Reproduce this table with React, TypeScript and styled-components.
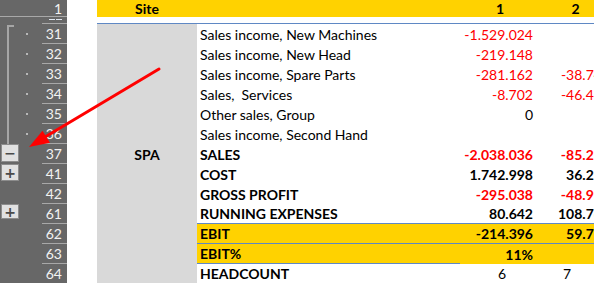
import styled, { createGlobalStyle } from 'styled-components';

const GlobalStyle = createGlobalStyle`
  html, body {
    margin: 0;
    padding: 0;
    background: #fff;
    overflow: hidden;
  }
  body {
    font-family: Lato, "Liberation Sans", sans-serif;
  }
`;

const YELLOW = '#ffd200';
const BLUE = '#5f88c4';
const GUTTER = '#676767';

const Frame = styled.div`
  position: relative;
  width: 594px;
  height: 283px;
  overflow: hidden;
`;

const Sheet = styled.div`
  display: grid;
  grid-template-columns: 42px 25px 30px 100px 263px 77px 77px;
  grid-template-rows: 17px 7px repeat(13, 20px);
  width: 614px;
  font-size: 14px;
  color: #000;
`;

const OutlineCell = styled.div<{ $line?: boolean }>`
  background: ${GUTTER};
  display: flex;
  align-items: stretch;
  box-sizing: border-box;
  border-bottom: ${(p) => (p.$line ? '1px solid #a8a8a8' : 'none')};
`;

const RowNum = styled.div<{ $clip?: boolean }>`
  background: ${GUTTER};
  color: #f2f2f2;
  font-size: 14px;
  box-sizing: border-box;
  border-bottom: 1px solid #a8a8a8;
  display: flex;
  justify-content: flex-end;
  align-items: ${(p) => (p.$clip ? 'flex-start' : 'center')};
  gap: 1px;
  padding-right: 5px;
  padding-top: ${(p) => (p.$clip ? '2px' : '0')};
  overflow: hidden;
  line-height: 19px;
`;

/* the top strokes of a row number squeezed into a tiny row */
const Stub = styled.span`
  width: 6px;
  height: 1px;
  background: #dfe6f0;
`;

const Blank = styled.div`
  background: #fff;
`;

const HeadCell = styled.div<{ $shift?: number }>`
  background: ${YELLOW};
  font-weight: bold;
  display: flex;
  align-items: center;
  justify-content: center;
  padding-left: ${(p) => p.$shift || 0}px;
  line-height: 17px;
  white-space: nowrap;
`;

const Spacer = styled.div<{ $blue?: boolean }>`
  background: #fff;
  box-sizing: border-box;
  border-bottom: ${(p) => (p.$blue ? `1px solid ${BLUE}` : 'none')};
`;

const SiteCell = styled.div`
  grid-column: 4;
  grid-row: 3 / span 13;
  background: #d9d9d9;
  border-bottom: 1px solid ${BLUE};
  box-sizing: border-box;
  display: flex;
  align-items: center;
  justify-content: center;
  font-weight: bold;
  padding-top: 2px;
`;

const Label = styled.div<{ $bold?: boolean; $fill?: boolean; $line?: boolean }>`
  background: ${(p) => (p.$fill ? YELLOW : '#fff')};
  font-weight: ${(p) => (p.$bold ? 'bold' : 'normal')};
  box-sizing: border-box;
  border-bottom: ${(p) => (p.$line ? `1px solid ${BLUE}` : 'none')};
  display: flex;
  align-items: center;
  padding-left: 3px;
  white-space: pre;
`;

const Value = styled.div<{
  $bold?: boolean;
  $red?: boolean;
  $fill?: boolean;
  $line?: boolean;
  $pad: number;
}>`
  background: ${(p) => (p.$fill ? YELLOW : '#fff')};
  color: ${(p) => (p.$red ? '#ff0000' : '#000')};
  font-weight: ${(p) => (p.$bold ? 'bold' : 'normal')};
  box-sizing: border-box;
  border-bottom: ${(p) => (p.$line ? `1px solid ${BLUE}` : 'none')};
  display: flex;
  align-items: center;
  justify-content: flex-end;
  padding-right: ${(p) => p.$pad}px;
  white-space: nowrap;
`;

const Bracket = styled.div<{ $top?: boolean }>`
  margin-left: 7px;
  width: 5px;
  margin-top: ${(p) => (p.$top ? '1px' : '0')};
  border-left: 2px solid #a6a6a6;
  border-top: ${(p) => (p.$top ? '2px solid #a6a6a6' : 'none')};
  flex-shrink: 0;
`;

const Dot = styled.div`
  width: 2px;
  height: 2px;
  background: #b8b8b8;
  margin-left: 12px;
  align-self: center;
`;

const OutlineButton = styled.div<{ $h: number }>`
  margin-left: 1px;
  width: 18px;
  height: ${(p) => p.$h}px;
  box-sizing: border-box;
  background: #e1e1e1;
  border: 1px solid #8c8c8c;
  color: #4a4a4a;
  font-family: "DejaVu Sans", sans-serif;
  font-weight: bold;
  font-size: 14px;
  display: flex;
  align-items: center;
  justify-content: center;
  line-height: 1;
`;

const Arrow = styled.svg`
  position: absolute;
  left: 0;
  top: 0;
  pointer-events: none;
`;

type Row = {
  n: number;
  label: string;
  v1?: string;
  v2?: string;
  bold?: boolean;
  boldLabel?: boolean;
  red1?: boolean;
  red2?: boolean;
  fill?: boolean;
  line1?: boolean;
  line2?: boolean;
  lineLabel?: boolean;
  outline?: 'top' | 'bracket' | 'minus' | 'plus' | 'plusSmall';
  center?: boolean;
};

const rows: Row[] = [
  { n: 31, label: 'Sales income, New Machines', v1: '-1.529.024', red1: true, outline: 'top' },
  { n: 32, label: 'Sales income, New Head', v1: '-219.148', red1: true, outline: 'bracket' },
  { n: 33, label: 'Sales income, Spare Parts', v1: '-281.162', v2: '-38.745', red1: true, red2: true, outline: 'bracket' },
  { n: 34, label: 'Sales,  Services', v1: '-8.702', v2: '-46.436', red1: true, red2: true, outline: 'bracket' },
  { n: 35, label: 'Other sales, Group', v1: '0', outline: 'bracket' },
  { n: 36, label: 'Sales income, Second Hand', outline: 'bracket' },
  { n: 37, label: 'SALES', v1: '-2.038.036', v2: '-85.215', bold: true, boldLabel: true, red1: true, red2: true, outline: 'minus' },
  { n: 41, label: 'COST', v1: '1.742.998', v2: '36.219', bold: true, boldLabel: true, outline: 'plus' },
  { n: 42, label: 'GROSS PROFIT', v1: '-295.038', v2: '-48.996', bold: true, boldLabel: true, red1: true, red2: true },
  { n: 61, label: 'RUNNING EXPENSES', v1: '80.642', v2: '108.760', bold: true, boldLabel: true, lineLabel: true, line1: true, line2: true, outline: 'plusSmall' },
  { n: 62, label: 'EBIT', v1: '-214.396', v2: '59.750', bold: true, boldLabel: true, fill: true, lineLabel: true, line1: true, line2: true },
  { n: 63, label: 'EBIT%', v1: '11%', bold: true, boldLabel: true, fill: true, lineLabel: true },
  { n: 64, label: 'HEADCOUNT', v1: '6', v2: '7', boldLabel: true, lineLabel: true, line1: true, line2: true, center: true },
];

function Outline({ kind }: { kind?: Row['outline'] }) {
  if (kind === 'top' || kind === 'bracket') {
    return (
      <OutlineCell>
        <Bracket $top={kind === 'top'} />
        <Dot />
      </OutlineCell>
    );
  }
  if (kind === 'minus') {
    return (
      <OutlineCell>
        <OutlineButton $h={18}>−</OutlineButton>
      </OutlineCell>
    );
  }
  if (kind === 'plus' || kind === 'plusSmall') {
    return (
      <OutlineCell>
        <OutlineButton $h={kind === 'plus' ? 17 : 15}>+</OutlineButton>
      </OutlineCell>
    );
  }
  return <OutlineCell />;
}

function SheetRow({ r }: { r: Row }) {
  return (
    <>
      <Outline kind={r.outline} />
      <RowNum>{r.n}</RowNum>
      <Blank />
      <Label $bold={r.boldLabel} $fill={r.fill} $line={r.lineLabel}>
        {r.label}
      </Label>
      <Value $bold={r.bold} $red={r.red1} $fill={r.fill} $line={r.line1} $pad={r.center ? 31 : 4}>
        {r.v1}
      </Value>
      <Value $bold={r.bold} $red={r.red2} $fill={r.fill} $line={r.line2} $pad={r.center ? 43 : 4}>
        {r.v2}
      </Value>
    </>
  );
}

export default function App() {
  return (
    <Frame>
      <GlobalStyle />
      <Sheet>
        <SiteCell>SPA</SiteCell>

        <OutlineCell $line />
        <RowNum>1</RowNum>
        <Blank />
        <HeadCell>Site</HeadCell>
        <HeadCell />
        <HeadCell $shift={3}>1</HeadCell>
        <HeadCell>2</HeadCell>

        <OutlineCell />
        <RowNum $clip>
          <Stub />
          <Stub />
        </RowNum>
        <Spacer />
        <Spacer $blue />
        <Spacer $blue />
        <Spacer $blue />
        <Spacer $blue />

        {rows.map((r) => (
          <SheetRow key={r.n} r={r} />
        ))}
      </Sheet>

      <Arrow width="594" height="283" viewBox="0 0 594 283">
        <line x1="159" y1="69" x2="45" y2="137" stroke="#ff0000" strokeWidth="3" strokeLinecap="round" />
        <polygon points="29,147 42.5,130.7 50,142.7" fill="#ff0000" />
      </Arrow>
    </Frame>
  );
}
